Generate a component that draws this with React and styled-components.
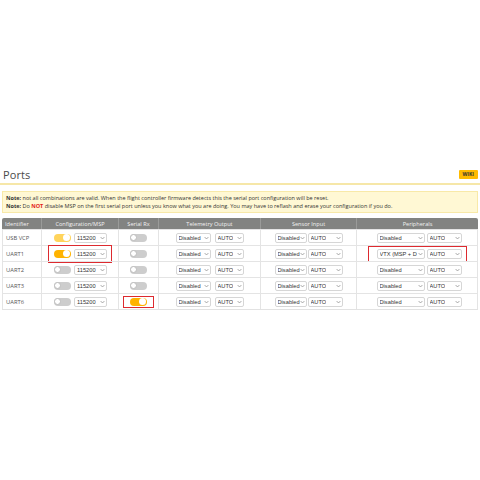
import React from "react"
import styled, { createGlobalStyle } from "styled-components"

const Global = createGlobalStyle`
  html, body {
    margin: 0;
    padding: 0;
    background: #fff;
  }
  body {
    font-family: "Open Sans", "Liberation Sans", sans-serif;
  }
`

const Page = styled.div`
  width: 480px;
  height: 480px;
  padding: 166px 2px 0 2px;
  box-sizing: border-box;
`

const TitleBar = styled.div`
  display: flex;
  justify-content: space-between;
  align-items: center;
  height: 17px;
  border-bottom: 2px solid #f6e7a8;
  margin: 0 -2px;
  padding: 0 2px 0 3px;
`

const Title = styled.h1`
  margin: 0;
  font-size: 11px;
  font-weight: 400;
  color: #4a4a4a;
  letter-spacing: 0.1px;
`

const Wiki = styled.span`
  background: #ffbb00;
  color: #333;
  font-size: 5px;
  font-weight: 700;
  padding: 2px 4px;
  border-radius: 1px;
  line-height: 5px;
`

const Note = styled.div`
  margin-top: 6px;
  background: #fff8d4;
  border: 1px solid #f8e9a8;
  padding: 2px 3px;
  font-size: 5.5px;
  line-height: 8px;
  color: #333;
  b { font-weight: 700; }
  .red { color: #e2231a; }
`

const Table = styled.div`
  margin-top: 5px;
  display: grid;
  grid-template-columns: 39px 77px 40px 102px 96px 122px;
  border-bottom: 1px solid #e2e2e2;
`

const Head = styled.div`
  background: #828381;
  color: #f2f2f2;
  font-size: 5.6px;
  height: 11px;
  display: flex;
  align-items: center;
  justify-content: ${(p) => (p.left ? "flex-start" : "center")};
  padding-left: ${(p) => (p.left ? "3px" : "0")};
  border-left: ${(p) => (p.first ? "none" : "1px solid #9a9b99")};
  border-radius: ${(p) => (p.first ? "2px 0 0 0" : p.last ? "0 2px 0 0" : "0")};
`

const Cell = styled.div`
  height: 16px;
  box-sizing: border-box;
  display: flex;
  align-items: center;
  justify-content: ${(p) => (p.left ? "flex-start" : "center")};
  padding-left: ${(p) => (p.left ? "3px" : "0")};
  border-top: 1px solid #e4e4e4;
  border-left: 1px solid #e4e4e4;
  border-right: ${(p) => (p.last ? "1px solid #e4e4e4" : "none")};
  font-size: 5.8px;
  color: #555;
`

const Mark = styled.div`
  display: flex;
  align-items: center;
  justify-content: center;
  gap: ${(p) => p.gap || 3}px;
  border: 1.5px solid ${(p) => (p.on ? "#dd2a2f" : "transparent")};
  padding: ${(p) => p.pad || "3px 4px"};
`

const Toggle = styled.span`
  position: relative;
  display: inline-block;
  width: 17px;
  height: 8px;
  border-radius: 4px;
  background: ${(p) => (p.on ? (p.dim ? "#ffd45c" : "#ffb300") : "#cdcdcd")};
  &::after {
    content: "";
    position: absolute;
    top: 0.5px;
    ${(p) => (p.on ? "right: 1px;" : "left: 0;")}
    width: 7px;
    height: 7px;
    border-radius: 50%;
    background: #fff;
    box-sizing: border-box;
    border: ${(p) => (p.on ? "none" : "0.5px solid #bcbcbc")};
  }
`

const Select = styled.span`
  display: inline-flex;
  align-items: center;
  justify-content: space-between;
  width: ${(p) => p.w}px;
  height: 10px;
  box-sizing: border-box;
  border: 1px solid #d6d6d6;
  border-radius: 2px;
  background: #fff;
  padding: 0 1px 0 2px;
  font-family: "Liberation Sans", Arial, sans-serif;
  font-size: 5.7px;
  color: #333;
  white-space: nowrap;
  overflow: hidden;
  span {
    flex: 0 1 auto;
    overflow: hidden;
  }
`

const Chevron = () => (
  <svg width="5" height="4" viewBox="0 0 5 4" style={{ flex: "none" }}>
    <path d="M0.6 1 L2.5 3 L4.4 1" fill="none" stroke="#777" strokeWidth="0.6" />
  </svg>
)

const Drop = ({ w, children }) => (
  <Select w={w}>
    <span>{children}</span>
    <Chevron />
  </Select>
)

const rows = [
  { id: "USB VCP", msp: true, dim: true },
  { id: "UART1", msp: true, markMsp: true, periph: "VTX (MSP + D", markPeriph: true },
  { id: "UART2" },
  { id: "UART3" },
  { id: "UART6", rx: true, markRx: true },
]

const App = () => (
  <Page>
    <Global />
    <TitleBar>
      <Title>Ports</Title>
      <Wiki>WIKI</Wiki>
    </TitleBar>
    <Note>
      <div>
        <b>Note:</b> not all combinations are valid. When the flight controller firmware detects this the serial port configuration will be reset.
      </div>
      <div>
        <b>Note:</b> Do <b className="red">NOT</b> disable MSP on the first serial port unless you know what you are doing. You may have to reflash and erase your configuration if you do.
      </div>
    </Note>
    <Table>
      <Head first left>Identifier</Head>
      <Head>Configuration/MSP</Head>
      <Head>Serial Rx</Head>
      <Head>Telemetry Output</Head>
      <Head>Sensor Input</Head>
      <Head last>Peripherals</Head>
      {rows.map((r) => (
        <React.Fragment key={r.id}>
          <Cell left>{r.id}</Cell>
          <Cell>
            <Mark on={r.markMsp} pad="3px 4px 3px 5px">
              <Toggle on={r.msp} dim={r.dim} />
              <Drop w={33}>115200</Drop>
            </Mark>
          </Cell>
          <Cell>
            <Mark on={r.markRx} pad="1px 6px">
              <Toggle on={r.rx} />
            </Mark>
          </Cell>
          <Cell>
            <Mark gap={4}>
              <Drop w={35}>Disabled</Drop>
              <Drop w={29}>AUTO</Drop>
            </Mark>
          </Cell>
          <Cell>
            <Mark gap={1}>
              <Drop w={32}>Disabled</Drop>
              <Drop w={35}>AUTO</Drop>
            </Mark>
          </Cell>
          <Cell last>
            <Mark on={r.markPeriph} gap={2} pad="2px 4px 2px 8px">
              <Drop w={48}>{r.periph || "Disabled"}</Drop>
              <Drop w={35}>AUTO</Drop>
            </Mark>
          </Cell>
        </React.Fragment>
      ))}
    </Table>
  </Page>
)

export default App
